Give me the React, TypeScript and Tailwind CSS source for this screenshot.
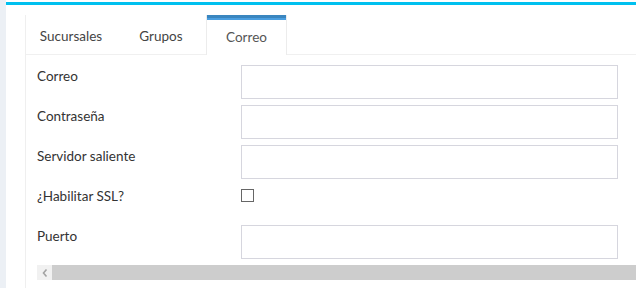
export default function App() {
  const font = { fontFamily: "Lato, 'Liberation Sans', sans-serif" };
  const rows: { label: string; type: "input" | "check" }[] = [
    { label: "Correo", type: "input" },
    { label: "Contraseña", type: "input" },
    { label: "Servidor saliente", type: "input" },
    { label: "¿Habilitar SSL?", type: "check" },
    { label: "Puerto", type: "input" },
  ];
  return (
    <div className="flex h-[288px] w-[636px] overflow-hidden bg-[#ecf0f5]" style={font}>
      <div className="ml-[6px] flex flex-1 flex-col bg-white pt-[2px]">
        <div className="h-[3px] bg-[#00c0ef]" />
        <div className="ml-[19px] mt-[10px] flex flex-1 flex-col border-l border-[#efefef]">
          <div className="flex h-[40px] gap-[5px] border-b border-[#f0f0f0]">
            <div className="flex w-[90px] items-center justify-center pt-[3px] text-[13.5px] text-[#444]">Sucursales</div>
            <div className="flex w-[80px] items-center justify-center pt-[3px] text-[13.5px] text-[#444]">Grupos</div>
            <div className="-mb-px flex w-[81px] flex-col border-x border-[#ececec] bg-white">
              <div className="h-[3px] bg-[#3a86bf]" />
              <div className="h-[2px] bg-[#4a9ee0]" />
              <div className="flex flex-1 items-center justify-center pb-[1px] text-[13.5px] text-[#555]">Correo</div>
            </div>
          </div>
          <div className="flex flex-col pl-[11px] pt-[10px]">
            {rows.map((r) => (
              <div key={r.label} className="mb-[6px] flex h-[34px]">
                <div className="w-[204px] pt-[1px] text-[13.5px] leading-[20px] text-[#333]">{r.label}</div>
                {r.type === "input" ? (
                  <div className="h-[34px] w-[377px] border border-[#d6d6de] bg-white" />
                ) : (
                  <div className="mt-[4px] h-[13px] w-[13px] border border-[#666]" />
                )}
              </div>
            ))}
            <div className="flex h-[15px]">
              <div className="flex w-[15px] items-center justify-center bg-[#f1f1f1]">
                <svg width="6" height="8" viewBox="0 0 6 8">
                  <path d="M4.5 0.5 L1.5 4 L4.5 7.5" fill="none" stroke="#a3a3a3" strokeWidth="1.6" />
                </svg>
              </div>
              <div className="flex-1 bg-[#cdcdcd]" />
            </div>
          </div>
        </div>
      </div>
    </div>
  );
}
